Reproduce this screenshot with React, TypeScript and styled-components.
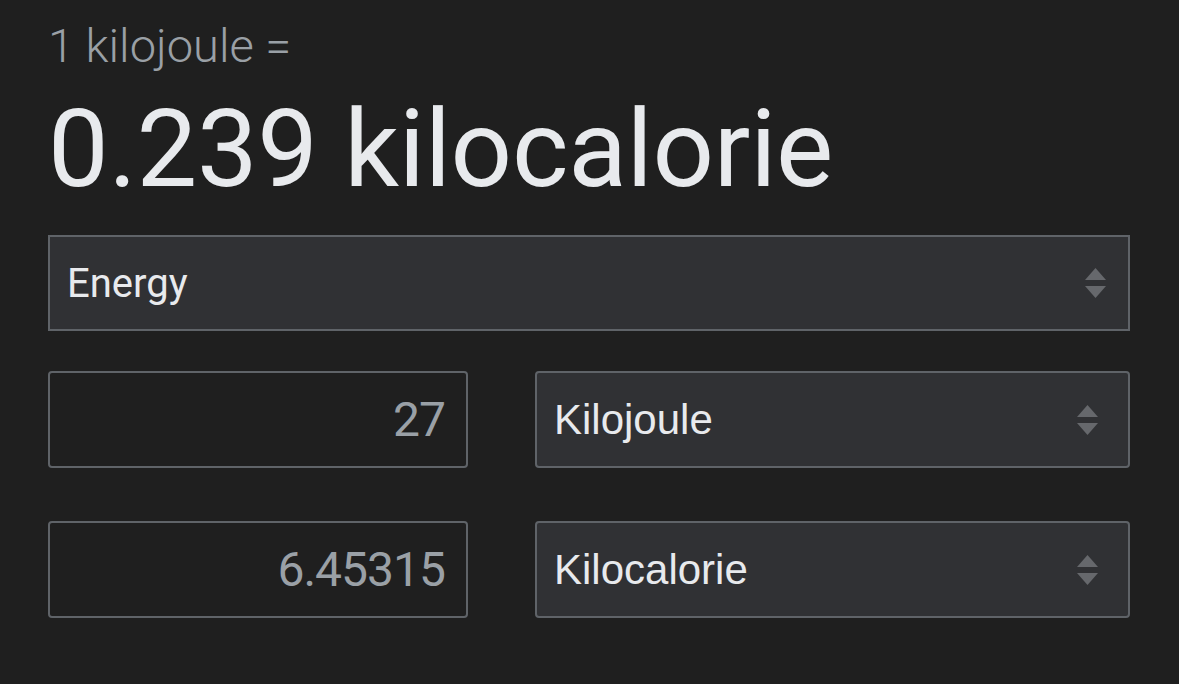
import React from "react";
import styled, { createGlobalStyle } from "styled-components";

const GlobalStyle = createGlobalStyle`
  html, body {
    margin: 0;
    padding: 0;
    background-color: #1f1f1f;
  }
  body {
    font-family: Roboto, "Liberation Sans", Arial, sans-serif;
  }
`;

const Page = styled.main`
  width: 1179px;
  height: 684px;
  box-sizing: border-box;
  padding: 18px 49px 0 48px;
  background-color: #1f1f1f;
  overflow: hidden;
`;

const Formula = styled.div`
  font-family: Roboto, sans-serif;
  font-size: 47px;
  line-height: 56px;
  font-weight: 300;
  color: #9aa0a6;
`;

const Result = styled.div`
  font-family: Roboto, sans-serif;
  font-size: 108px;
  line-height: 110px;
  color: #e8eaed;
  margin-top: 20px;
  letter-spacing: -0.3px;
`;

const SelectBox = styled.div<{ $rounded?: boolean; $font?: string; $size: number; $arrowPad: number }>`
  box-sizing: border-box;
  height: ${(p) => (p.$rounded ? 97 : 96)}px;
  display: flex;
  align-items: center;
  justify-content: space-between;
  padding: 0 ${(p) => p.$arrowPad}px 0 17px;
  background-color: #303134;
  border: 2px solid #5f6368;
  border-radius: ${(p) => (p.$rounded ? 4 : 0)}px;
  color: #e8eaed;
  font-family: ${(p) => p.$font || "Roboto, sans-serif"};
  font-size: ${(p) => p.$size}px;
`;

const CategorySelect = styled(SelectBox)`
  margin-top: 31px;
`;

const Row = styled.div<{ $gap: number }>`
  display: grid;
  grid-template-columns: 420px 595px;
  column-gap: 67px;
  margin-top: ${(p) => p.$gap}px;
`;

const NumberBox = styled.div`
  box-sizing: border-box;
  height: 97px;
  display: flex;
  align-items: center;
  justify-content: flex-end;
  padding-right: 21px;
  border: 2px solid #5f6368;
  border-radius: 4px;
  background-color: #1f1f1f;
  color: #9aa0a6;
  font-family: Roboto, sans-serif;
  font-size: 48px;
  letter-spacing: -1px;
`;

const Arrows = () => (
  <svg width="23" height="34" viewBox="0 0 23 34" aria-hidden="true">
    <path d="M11.5 2 L22 14 L1 14 Z" fill="#66686c" />
    <path d="M1 20 L22 20 L11.5 32 Z" fill="#66686c" />
  </svg>
);

const units = [
  { value: "27", unit: "Kilojoule", gap: 40 },
  { value: "6.45315", unit: "Kilocalorie", gap: 53 },
];

export default function App() {
  return (
    <>
      <GlobalStyle />
      <Page>
        <Formula>1 kilojoule =</Formula>
        <Result>0.239 kilocalorie</Result>
        <CategorySelect $size={40} $arrowPad={21}>
          <span>Energy</span>
          <Arrows />
        </CategorySelect>
        {units.map((u) => (
          <Row key={u.unit} $gap={u.gap}>
            <NumberBox>{u.value}</NumberBox>
            <SelectBox $rounded $font='"Liberation Sans", Arial, sans-serif' $size={42} $arrowPad={29}>
              <span>{u.unit}</span>
              <Arrows />
            </SelectBox>
          </Row>
        ))}
      </Page>
    </>
  );
}
